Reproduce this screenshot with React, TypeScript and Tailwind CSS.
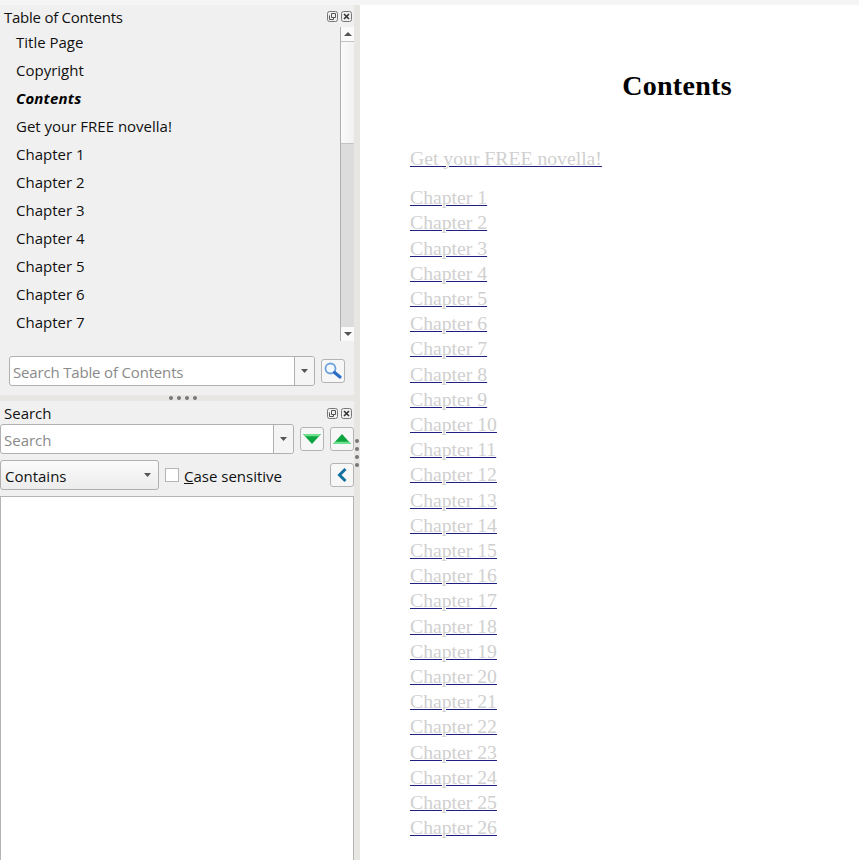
import React from "react";

const ui = { fontFamily: '"Open Sans", "Noto Sans", sans-serif' };

function Caret({ className = "", w = 7 }: { className?: string; w?: number }) {
  return (
    <svg width={w} height="4" viewBox="0 0 9 5" preserveAspectRatio="none" className={className}>
      <path d="M0 0H9L4.5 5Z" fill="#555" />
    </svg>
  );
}

function DockIcons() {
  return (
    <div className="flex gap-[3px] items-center mt-[1px]">
      <svg width="11" height="11" viewBox="0 0 11 11" fill="none" stroke="#555">
        <rect x=".5" y=".5" width="10" height="10" rx="2" stroke="#777" />
        <path d="M4.5 2.5h4v4h-4z M2.5 4.5v4h4v-2" strokeWidth="1" />
      </svg>
      <svg width="11" height="11" viewBox="0 0 11 11" fill="none">
        <rect x=".5" y=".5" width="10" height="10" rx="2" stroke="#777" />
        <path d="M3 3l5 5M8 3l-5 5" stroke="#333" strokeWidth="1.6" />
      </svg>
    </div>
  );
}

function TitleBar({ title, className = "", titleClass = "" }: { title: string; className?: string; titleClass?: string }) {
  return (
    <div className={`flex items-center justify-between pl-1 pr-[2px] text-[15px] leading-5 text-[#111] ${className}`}>
      <span className={titleClass}>{title}</span>
      <DockIcons />
    </div>
  );
}

function ToolBtn({ children, className = "" }: { children: React.ReactNode; className?: string }) {
  return (
    <div className={`w-6 h-6 flex items-center justify-center rounded-[3px] border border-[#b4b4b4] bg-[#f7f7f7] ${className}`}>
      {children}
    </div>
  );
}

function Dots({ vertical = false }: { vertical?: boolean }) {
  return (
    <div className={`flex gap-[4px] ${vertical ? "flex-col" : "flex-row"}`}>
      {[0, 1, 2, 3].map((i) => (
        <span key={i} className="w-[4px] h-[4px] rounded-full bg-[#777]" />
      ))}
    </div>
  );
}

const tocItems = ["Title Page", "Copyright", "Contents", "Get your FREE novella!", "Chapter 1", "Chapter 2", "Chapter 3", "Chapter 4", "Chapter 5", "Chapter 6", "Chapter 7"];
const chapters = Array.from({ length: 26 }, (_, i) => `Chapter ${i + 1}`);

function TocPanel() {
  return (
    <div className="h-[390px] bg-[#f0f0f0] flex flex-col">
      <TitleBar title="Table of Contents" titleClass="tracking-[-0.25px] pt-[1px]" className="h-[22px] shrink-0" />
      <div className="flex h-[314px] shrink-0">
        <div className="flex-1 pt-[1px]">
          {tocItems.map((t) => (
            <div
              key={t}
              className={`h-7 pl-4 flex items-center text-[15px] text-[#111] ${t === "Contents" ? "font-bold italic text-black tracking-[0.2px]" : ""}`}
            >
              {t}
            </div>
          ))}
        </div>
        <div className="w-[14px] flex flex-col border-l border-[#b0b0b0] bg-[#dcdcdc]">
          <div className="h-[14px] flex items-center justify-center bg-[#fafafa]">
            <Caret w={8} className="rotate-180" />
          </div>
          <div className="h-[103px] bg-gradient-to-r from-[#fbfbfb] to-[#f1f1f1] border-y border-[#c4c4c4]" />
          <div className="flex-1" />
          <div className="h-[14px] flex items-center justify-center bg-[#fafafa]">
            <Caret w={8} />
          </div>
        </div>
      </div>
      <div className="flex items-center gap-[6px] pl-[9px] pt-[15px]">
        <div className="w-[306px] h-[30px] flex rounded-[3px] border border-[#b0b0b0] bg-white">
          <div className="flex-1 flex items-center pl-[3px] pt-[2px] text-[15px] tracking-[-0.17px] text-[#8a8a8a]">Search Table of Contents</div>
          <div className="w-[20px] flex items-center justify-center border-l border-[#b0b0b0] bg-[#f5f5f5] rounded-r-[3px]">
            <Caret />
          </div>
        </div>
        <ToolBtn>
          <svg width="20" height="20" viewBox="0 0 20 20" fill="none">
            <circle cx="7.5" cy="7.5" r="5" stroke="#6ea2dc" strokeWidth="1.8" fill="#f4f9ff" />
            <path d="M11.5 11.5L17 16" stroke="#2b6cc4" strokeWidth="3.2" strokeLinecap="round" />
          </svg>
        </ToolBtn>
      </div>
    </div>
  );
}

function SearchPanel() {
  return (
    <div className="flex-1 bg-[#f0f0f0] flex flex-col">
      <TitleBar title="Search" className="h-[23px] shrink-0" />
      <div className="flex items-center h-[30px] shrink-0">
        <div className="w-[294px] h-[30px] flex rounded-[3px] border border-[#b0b0b0] bg-white">
          <div className="flex-1 flex items-center pl-[3px] pt-[2px] text-[15px] text-[#8a8a8a]">Search</div>
          <div className="w-[20px] flex items-center justify-center border-l border-[#b0b0b0] bg-[#f5f5f5] rounded-r-[3px]">
            <Caret />
          </div>
        </div>
        <ToolBtn className="ml-[6px]">
          <svg width="18" height="10" viewBox="0 0 18 10">
            <path d="M0 0H18L9 10Z" fill="#0ea53f" />
            <path d="M0 0H18L16 2.2H2Z" fill="#6fe08f" />
          </svg>
        </ToolBtn>
        <ToolBtn className="ml-[6px]">
          <svg width="18" height="10" viewBox="0 0 18 10">
            <path d="M0 10H18L9 0Z" fill="#0ea53f" />
            <path d="M0 10H18L16 7.8H2Z" fill="#6fe08f" />
          </svg>
        </ToolBtn>
      </div>
      <div className="flex items-center mt-[6px] h-[30px] shrink-0">
        <div className="w-[159px] h-[30px] flex items-center justify-between pl-1 pr-[7px] rounded-[3px] border border-[#b0b0b0] bg-gradient-to-b from-[#fafafa] to-[#ececec] text-[15px] text-[#111]">
          <span className="pt-[2px]">Contains</span>
          <Caret />
        </div>
        <span className="ml-[6px] w-[14px] h-[14px] border border-[#b4b4b4] bg-white" />
        <span className="ml-[5px] pt-[2px] text-[15px] text-[#111]">
          <span className="underline">C</span>ase sensitive
        </span>
        <ToolBtn className="ml-auto">
          <svg width="12" height="16" viewBox="0 0 12 16" fill="none">
            <path d="M9.5 2L3.5 8L9.5 14" stroke="#14709f" strokeWidth="3" />
          </svg>
        </ToolBtn>
      </div>
      <div className="flex-1 mt-[6px] bg-white border border-[#b4b4b4] border-b-0" />
    </div>
  );
}

export default function App() {
  return (
    <div className="w-[859px] h-[860px] flex flex-col overflow-hidden bg-[#f5f5f5]" style={ui}>
      <div className="h-[5px] shrink-0 bg-[#f5f5f5]" />
      <div className="flex flex-1 min-h-0">
        <div className="w-[354px] shrink-0 flex flex-col bg-[#e8e6e2]">
          <TocPanel />
          <div className="h-[6px] shrink-0 flex items-center justify-center pl-[12px]">
            <Dots />
          </div>
          <SearchPanel />
        </div>
        <div className="w-[6px] shrink-0 bg-[#e8e6e2] relative">
          <div className="absolute left-[1px] top-[434px]">
            <Dots vertical />
          </div>
        </div>
        <div className="flex-1 min-w-0 bg-white pl-[50px] overflow-hidden" style={{ fontFamily: '"Liberation Serif", serif' }}>
          <div className="w-[534px]">
            <h1 className="text-center text-[28px] font-bold leading-8 pt-[65px] tracking-[0.3px] text-black">Contents</h1>
            <div className="mt-[44px] text-[19.7px] leading-[25.2px] text-[#d0d0d0]">
              <div className="mb-[14px]">
                <a className="underline decoration-[#1f1f80] decoration-1">Get your FREE novella!</a>
              </div>
              {chapters.map((c) => (
                <div key={c}>
                  <a className="underline decoration-[#1f1f80] decoration-1">{c}</a>
                </div>
              ))}
            </div>
          </div>
        </div>
      </div>
    </div>
  );
}
